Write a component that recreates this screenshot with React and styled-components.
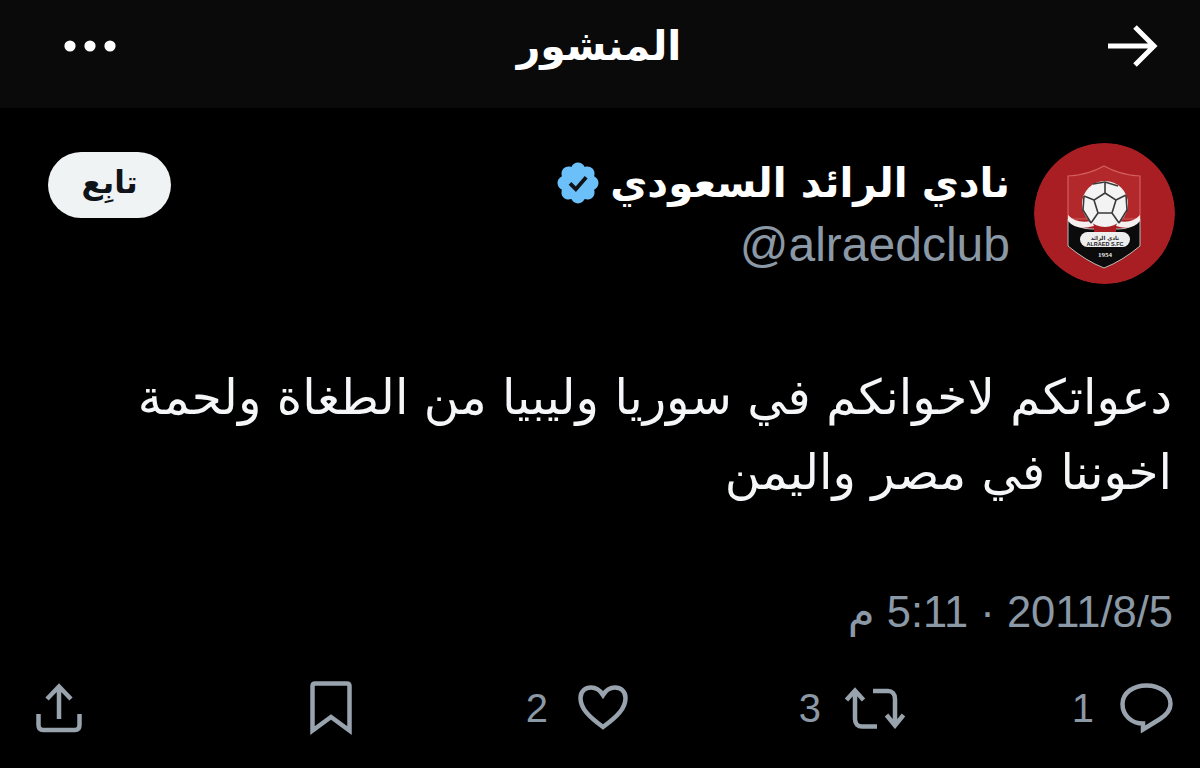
import React from "react";
import styled, { createGlobalStyle } from "styled-components";

const Global = createGlobalStyle`
  html, body { margin: 0; padding: 0; background: #000; }
  #root { width: 1200px; height: 768px; overflow: hidden; }
`;
const Page = styled.div`
  width: 1200px; height: 768px; background: #000; color: #fff;
  display: flex; flex-direction: column;
  font-family: "DejaVu Sans", "Noto Sans", sans-serif;
`;
const TopBar = styled.header`
  height: 108px; flex: none; background: #0a0a0a;
  display: flex; align-items: center; justify-content: space-between;
  direction: rtl; padding: 0 42px 16px 64px; box-sizing: border-box;
`;
const BarTitle = styled.h1`
  margin: 0 26px 0 0; font-size: 41px; font-weight: 700; line-height: 48px; color: #fff;
`;
const BarButton = styled.span`display: flex; align-items: center; justify-content: center;`;
const AuthorRow = styled.section`
  display: flex; direction: rtl; align-items: flex-start;
  padding: 35px 25px 0 29px; height: 141px; flex: none;
`;
const Avatar = styled.svg`width: 141px; height: 141px; flex: none; border-radius: 50%;`;
const Identity = styled.div`
  flex: 1; padding: 16px 24px 0 0; display: flex; flex-direction: column; align-items: flex-start;
`;
const NameLine = styled.div`display: flex; align-items: center; gap: 8px; height: 48px;`;
const Name = styled.span`font-size: 40.5px; font-weight: 700; line-height: 48px; white-space: nowrap;`;
const Handle = styled.div`
  direction: ltr; margin-top: 14px; font-family: "Liberation Sans", sans-serif;
  font-size: 48px; line-height: 48px; color: #8b98a5;
`;
const FollowButton = styled.button`
  width: 123px; height: 66px; margin: 9px 0 0 19px; border: 0; border-radius: 33px; background: #eff3f4;
  color: #0f1419; font: 700 31px/1 "DejaVu Sans", sans-serif; flex: none; padding: 0 0 6px;
`;
const Body = styled.p`
  margin: 0; padding: 76px 28px 0 28px; direction: rtl; flex: none;
  font-size: 48.5px; line-height: 75px; color: #f4f6f7;
`;
const Stamp = styled.div`
  margin-top: 78px; padding-right: 27px; direction: rtl; flex: none;
  font-family: "Liberation Sans", "DejaVu Sans", sans-serif;
  font-size: 43.5px; line-height: 48px; color: #8b98a5; white-space: nowrap;
`;
const Actions = styled.footer`
  flex: none; margin-top: 42px; height: 60px; padding: 0 27px 0 36px;
  display: grid; direction: rtl; align-items: center;
  grid-template-columns: 268px 277px 276px 1fr auto;
`;
const Action = styled.span`
  display: flex; align-items: center; gap: ${p => p.$gap}px;
`;
const Count = styled.span`
  font-family: "Liberation Sans", sans-serif; font-size: 40px; line-height: 48px; color: #8b98a5;
`;
const Icon = styled.svg`
  width: ${p => p.$w}px; height: ${p => p.$h}px; flex: none; fill: none; stroke: #98a3ae;
  stroke-width: 4.5; stroke-linejoin: miter;
`;

const Crest = () => (
  <Avatar viewBox="0 0 141 141">
    <circle cx="70.5" cy="70.5" r="70.5" fill="#a81e22" />
    <path d="M34 33 Q54 32 70 23 Q86 32 106 33 L106 76 H34 Z" fill="#b3282a" stroke="#d4605f" strokeWidth="1.2" />
    <path d="M34 76 Q44 86 57 86 H85 Q98 86 106 76 V103 Q88 118 70 125 Q52 118 34 103 Z" fill="#0b0b0b" stroke="#bbb" strokeWidth="1" />
    <path d="M34 72 Q42 81 58 78 L60 83 Q42 88 34 78 Z M106 72 Q98 81 84 78 L82 83 Q98 88 106 78 Z" fill="#f4eeee" />
    <rect x="60" y="76" width="22" height="15" fill="#a81e22" />
    <circle cx="71" cy="61" r="23" fill="#f3f3f3" />
    <path d="M71 50 L82 57 L78 70 H64 L60 57 Z M71 50 V39 M82 57 L92 52 M78 70 L85 80 M64 70 L57 80 M60 57 L50 53 M59 41 L71 39 L84 43 M92 52 L93 67 L85 80 M50 53 L49 67 L57 80" fill="none" stroke="#3a3a3a" strokeWidth="1.6" />
    <rect x="46" y="89" width="50" height="15" rx="7.5" fill="#eee" />
    <text x="71" y="102.5" textAnchor="middle" fontFamily="Liberation Sans" fontWeight="700" fontSize="5.5" fill="#222">ALRAED S.FC</text>
    <text x="71" y="97" textAnchor="middle" fontFamily="DejaVu Sans" fontWeight="700" fontSize="5.5" fill="#222" direction="rtl">نادي الرائد</text>
    <text x="71" y="114" textAnchor="middle" fontFamily="Liberation Serif" fontWeight="700" fontSize="7" fill="#e8e8e8">1954</text>
  </Avatar>
);

const Badge = () => (
  <svg width="48" height="48" viewBox="0 0 24 24">
    <path fill="#6cc0fa" d="M22.25 12c0-1.43-.88-2.67-2.19-3.34.46-1.39.2-2.9-.81-3.91s-2.52-1.27-3.91-.81c-.66-1.31-1.91-2.19-3.34-2.19s-2.67.88-3.33 2.19c-1.4-.46-2.91-.2-3.92.81s-1.26 2.52-.8 3.91c-1.31.67-2.2 1.91-2.2 3.34s.89 2.67 2.2 3.34c-.46 1.39-.21 2.9.8 3.91s2.52 1.26 3.91.81c.67 1.31 1.91 2.19 3.34 2.19s2.68-.88 3.34-2.19c1.39.45 2.9.2 3.91-.81s1.27-2.52.81-3.91c1.31-.67 2.19-1.91 2.19-3.34z" />
    <path fill="none" stroke="#101418" strokeWidth="1.9" d="M8 12.2l2.9 2.9 5.2-6" />
  </svg>
);

export default function App() {
  return (
    <Page>
      <Global />
      <TopBar>
        <BarButton>
          <svg width="50" height="42" viewBox="0 0 50 42" fill="none" stroke="#fff" strokeWidth="5">
            <path d="M0 21 H46 M27 2 L46 21 L27 40" />
          </svg>
        </BarButton>
        <BarTitle>المنشور</BarTitle>
        <BarButton>
          <svg width="52" height="12" viewBox="0 0 52 12" fill="#fff">
            <circle cx="6" cy="6" r="5.6" /><circle cx="26" cy="6" r="5.6" /><circle cx="46" cy="6" r="5.6" />
          </svg>
        </BarButton>
      </TopBar>
      <AuthorRow>
        <Crest />
        <Identity>
          <NameLine><Name>نادي الرائد السعودي</Name><Badge /></NameLine>
          <Handle>@alraedclub</Handle>
        </Identity>
        <FollowButton>تابِع</FollowButton>
      </AuthorRow>
      <Body>دعواتكم لاخوانكم في سوريا وليبيا من الطغاة ولحمة اخوننا في مصر واليمن</Body>
      <Stamp>2011/8/5 · 5:11 م</Stamp>
      <Actions>
        <Action $gap={26}>
          <Icon $w="53" $h="50" viewBox="0 0 53 50">
            <path d="M23 40.5 V46.5 L40 36 C47 31.5 50.5 27 50.5 21 C50.5 10 40 2.5 26.5 2.5 C13 2.5 2.5 10 2.5 21 C2.5 32.5 12 40.5 23 40.5 Z" />
          </Icon>
          <Count>1</Count>
        </Action>
        <Action $gap={24}>
          <Icon $w="60" $h="42" viewBox="0 0 60 42">
            <path d="M1.5 13 L10 3.5 L18.5 13 M10 4 V32 C10 37 13 39.5 17 39.5 H32" />
            <path d="M28 4 H43 C47 4 50 7 50 12 V38 M41.5 28 L50 38.5 L58.5 28" />
          </Icon>
          <Count>3</Count>
        </Action>
        <Action $gap={30}>
          <Icon $w="50" $h="46" viewBox="0 0 50 46">
            <path d="M25 42 C10 31 2.5 23 2.5 13 C2.5 6 7.5 2.5 13 2.5 C18 2.5 22 5 25 10 C28 5 32 2.5 37 2.5 C42.5 2.5 47.5 6 47.5 13 C47.5 23 40 31 25 42 Z" />
          </Icon>
          <Count>2</Count>
        </Action>
        <Action $gap={0}>
          <Icon $w="42" $h="54" viewBox="0 0 42 54">
            <path d="M2.5 49.5 V5 Q2.5 2.5 5 2.5 H37 Q39.5 2.5 39.5 5 V49.5 L21 36 Z" />
          </Icon>
        </Action>
        <Action $gap={0}>
          <Icon $w="46" $h="50" viewBox="0 0 46 50">
            <path d="M2.5 31 V42 Q2.5 47 7 47 H39 Q43.5 47 43.5 42 V31 M23 36 V4 M11 16 L23 3.5 L35 16" />
          </Icon>
        </Action>
      </Actions>
    </Page>
  );
}
